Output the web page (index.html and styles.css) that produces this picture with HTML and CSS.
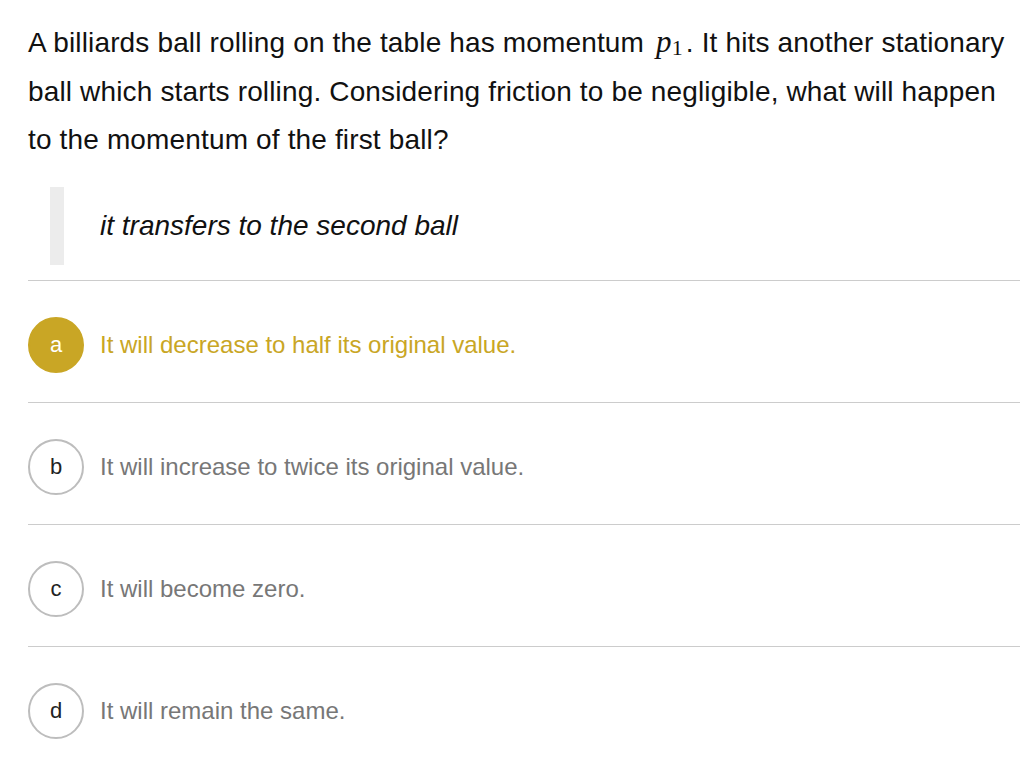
FILE: index.html
```html
<!DOCTYPE html>
<html lang="en">
<head>
    <meta charset="UTF-8">
    <meta name="viewport" content="width=device-width, initial-scale=1.0">
    <title>Question</title>
    <link rel="stylesheet" href="styles.css">
</head>
<body>
    <div class="question-container">
        <p class="question">A billiards ball rolling on the table has momentum <span class="math">p<sub>1</sub></span>. It hits another stationary ball which starts rolling. Considering friction to be negligible, what will happen to the momentum of the first ball?</p>

        <blockquote class="answer-quote">it transfers to the second ball</blockquote>

        <ul class="options">
            <li class="option selected">
                <span class="option-letter">a</span>
                <span class="option-text">It will decrease to half its original value.</span>
            </li>
            <li class="option">
                <span class="option-letter">b</span>
                <span class="option-text">It will increase to twice its original value.</span>
            </li>
            <li class="option">
                <span class="option-letter">c</span>
                <span class="option-text">It will become zero.</span>
            </li>
            <li class="option">
                <span class="option-letter">d</span>
                <span class="option-text">It will remain the same.</span>
            </li>
        </ul>
    </div>
</body>
</html>
```

FILE: styles.css
```css
body {
    font-family: "Liberation Sans", Arial, sans-serif;
    background-color: #ffffff;
    color: #111;
    margin: 0;
}
.question-container {
    padding: 19px 4px 0 28px;
}
.question {
    font-size: 28px;
    line-height: 48.5px;
    letter-spacing: 0.15px;
    margin: 0;
}
.math {
    font-family: "Liberation Serif", "Times New Roman", serif;
    font-style: italic;
    font-size: 31px;
    line-height: 0;
    margin: 0 3px 0 4px;
}
.math sub {
    font-style: normal;
    font-size: 22px;
    line-height: 0;
    vertical-align: -3px;
}
.answer-quote {
    margin: 22px 0 0 22px;
    padding: 15px 0 15px 36px;
    border-left: 14px solid #ececec;
    font-size: 28px;
    line-height: 48px;
    font-style: italic;
}
.options {
    list-style: none;
    margin: 15px 0 0;
    padding: 0;
    border-top: 1px solid #cccccc;
}
.option {
    display: flex;
    align-items: center;
    padding: 36px 0 29px;
    border-bottom: 1px solid #cccccc;
    color: #777777;
}
.option:last-child {
    border-bottom: none;
}
.option-letter {
    width: 56px;
    height: 56px;
    box-sizing: border-box;
    border-radius: 50%;
    border: 2px solid #bdbdbd;
    display: flex;
    align-items: center;
    justify-content: center;
    font-size: 22px;
    color: #222;
    flex-shrink: 0;
}
.option-text {
    margin-left: 16px;
    font-size: 24px;
}
.option.selected {
    color: #c9a625;
}
.option.selected .option-letter {
    background-color: #c9a625;
    border-color: #c9a625;
    color: #ffffff;
}
```
